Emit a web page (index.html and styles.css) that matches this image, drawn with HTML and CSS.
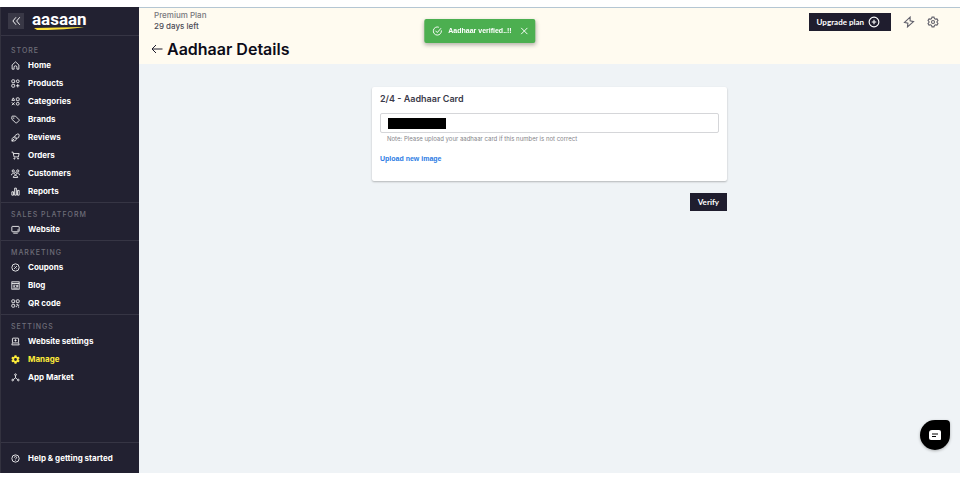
FILE: index.html
```html
<!DOCTYPE html>
<html lang="en">
<head>
    <meta charset="UTF-8">
    <meta name="viewport" content="width=device-width, initial-scale=1.0">
    <title>Aadhaar Details - aasaan</title>
    <link rel="stylesheet" href="styles.css">
</head>
<body>
    <div class="app">
        <aside class="sidebar">
            <div class="brand">
                <button class="collapse" type="button" aria-label="Collapse menu">
                    <svg viewBox="0 0 16 16"><path d="M8 2 3 8 8 14M14 2 9 8 14 14"/></svg>
                </button>
                <a href="#" class="logo">
                    <span>aasaan</span>
                    <svg class="swoosh" viewBox="0 0 52 4"><path d="M2 1 52 0C40 2 18 3.500 5 3Z"/></svg>
                </a>
            </div>
            <nav class="menu">
                <section class="group">
                    <h2>STORE</h2>
                    <ul>
                        <li><a href="#"><svg viewBox="0 0 16 16"><path d="M2 7 8 1.500 14 7V14.500H10.500V11A2.500 2.500 0 0 0 5.500 11V14.500H2Z"/></svg>Home</a></li>
                        <li><a href="#"><svg viewBox="0 0 16 16"><rect x="1.500" y="1.500" width="5" height="5" rx="1"/><rect x="9.500" y="1.500" width="5" height="5" rx="2.500"/><rect x="1.500" y="9.500" width="5" height="5" rx="1"/><path d="M12 9V15M9 12H15"/></svg>Products</a></li>
                        <li><a href="#"><svg viewBox="0 0 16 16"><path d="M4 1.500 6.500 6H1.500Z"/><rect x="9.500" y="1.500" width="5" height="5" rx="1"/><circle cx="12" cy="12" r="2.500"/><path d="M1.500 9.500 6.500 14.500M6.500 9.500 1.500 14.500"/></svg>Categories</a></li>
                        <li><a href="#"><svg viewBox="0 0 16 16"><path d="M1.500 3Q1.500 2 2.500 2H8L14.500 8.500Q15 9 14.500 9.700L10 14.200Q9.300 14.700 8.500 14L1.500 7.500Z"/><circle cx="5" cy="5.500" r=".5"/></svg>Brands</a></li>
                        <li><a href="#"><svg viewBox="0 0 16 16"><path d="M7 5.500Q7 4.500 8 4L11.500 1.800Q14.500 1 14.500 4L13.500 8Q13 9 12 9H8.500Q7 9 7 7.500ZM7 6.500 3.500 8Q2 9 2 11L1.500 14.500 6 14Q8.500 13.500 9 12L9.500 9M2 14 6 10"/></svg>Reviews</a></li>
                        <li><a href="#"><svg viewBox="0 0 16 16"><path d="M1 2H3.500L5.500 10.500H13L14.500 4.500H4"/><circle cx="6" cy="13.500" r="1"/><circle cx="12.500" cy="13.500" r="1"/></svg>Orders</a></li>
                        <li><a href="#"><svg viewBox="0 0 16 16"><circle cx="4" cy="3.500" r="2"/><circle cx="12" cy="3.500" r="2"/><circle cx="8" cy="8" r="2"/><path d="M1 11C1 7 4 7 5 8M15 11C15 7 12 7 11 8M4 15C4 10.500 12 10.500 12 15Z"/></svg>Customers</a></li>
                        <li><a href="#"><svg viewBox="0 0 16 16"><path d="M1.500 8.500H4.500V14.500H1.500ZM6.500 2H9.500V14.500H6.500ZM11.500 6H14.500V14.500H11.500Z"/></svg>Reports</a></li>
                    </ul>
                </section>
                <section class="group">
                    <h2>SALES PLATFORM</h2>
                    <ul>
                        <li><a href="#"><svg viewBox="0 0 16 16"><rect x="1.500" y="2.500" width="13" height="9.500" rx="1"/><path d="M4 14.500H12M11 9H14"/></svg>Website</a></li>
                    </ul>
                </section>
                <section class="group">
                    <h2>MARKETING</h2>
                    <ul>
                        <li><a href="#"><svg viewBox="0 0 16 16"><circle cx="8" cy="8" r="6.500"/><path d="M5.500 10.500 10.500 5.500M5.500 6H6.500M9.500 10H10.500"/></svg>Coupons</a></li>
                        <li><a href="#"><svg viewBox="0 0 16 16"><rect x="1.500" y="1.500" width="13" height="13"/><path d="M1.500 4.500H14.500M4 7.500H8M4 10H7M4 12.500H12M10 7.500H12V10H10Z"/></svg>Blog</a></li>
                        <li><a href="#"><svg viewBox="0 0 16 16"><rect x="1.500" y="1.500" width="5" height="5" rx="1"/><rect x="9.500" y="1.500" width="5" height="5" rx="1"/><rect x="1.500" y="9.500" width="5" height="5" rx="1"/><path d="M9.500 9.500H12V12H14.500M9.500 14.500V12M12.500 14.500H14.500M14.500 9.500V10"/></svg>QR code</a></li>
                    </ul>
                </section>
                <section class="group">
                    <h2>SETTINGS</h2>
                    <ul>
                        <li><a href="#"><svg viewBox="0 0 16 16"><rect x="2.500" y="2" width="11" height="8.500" rx="1"/><path d="M2.500 10.500 1.500 14H14.500L13.500 10.500M8 4V8M6 6H10"/></svg>Website settings</a></li>
                        <li><a href="#" class="active"><svg viewBox="0 0 16 16"><path class="solid" fill-rule="evenodd" d="M6.300 .5H9.700L10.200 2.800 11.500 3.600 13.800 2.900 15.500 5.800 13.700 7.300V8.700L15.500 10.200 13.800 13.100 11.500 12.400 10.200 13.200 9.700 15.500H6.300L5.800 13.200 4.500 12.400 2.200 13.100 .5 10.200 2.300 8.700V7.300L.5 5.800 2.200 2.900 4.500 3.600 5.800 2.800ZM8 5.500A2.500 2.500 0 1 0 8 10.500 2.500 2.500 0 1 0 8 5.500Z"/></svg>Manage</a></li>
                        <li><a href="#"><svg viewBox="0 0 16 16"><circle cx="8" cy="3" r="1.500"/><circle cx="3" cy="12.500" r="1.500"/><circle cx="13" cy="12.500" r="1.500"/><path d="M8 4.500V8.500L4.300 11.500M8 8.500 11.700 11.500"/></svg>App Market</a></li>
                    </ul>
                </section>
            </nav>
            <a href="#" class="help"><svg viewBox="0 0 16 16"><circle cx="8" cy="8" r="6.500"/><path d="M6 6.500C6 3.500 10 3.700 10 6.300 10 7.800 8 7.800 8 9.500M8 11V12"/></svg>Help &amp; getting started</a>
        </aside>

        <main class="main">
            <header class="topbar">
                <div>
                    <p class="plan">Premium Plan</p>
                    <p class="days">29 days left</p>
                    <div class="title">
                        <a href="#" aria-label="Back"><svg viewBox="0 0 12 10"><path d="M11.500 5H1M5 1 1 5 5 9"/></svg></a>
                        <h1>Aadhaar Details</h1>
                    </div>
                </div>
                <div class="actions">
                    <button class="upgrade" type="button">Upgrade plan
                        <svg viewBox="0 0 16 16"><circle cx="8" cy="8" r="6.500"/><path d="M8 5V11M5 8H11"/></svg>
                    </button>
                    <button class="icon-btn" type="button" aria-label="Quick actions">
                        <svg viewBox="0 0 16 16"><path d="M9.500 1.500 2 8.500 6.500 9.500 6 14.500 14 7.500 9.500 6.500Z"/></svg>
                    </button>
                    <button class="icon-btn" type="button" aria-label="Settings">
                        <svg viewBox="0 0 16 16"><path d="M6.700 1.500H9.300L10 3.500 11.300 4.200 13.300 3.800 14.600 6 13.300 7.500V8.500L14.600 10 13.300 12.200 11.300 11.800 10 12.500 9.300 14.500H6.700L6 12.500 4.700 11.800 2.700 12.200 1.400 10 2.700 8.500V7.500L1.400 6 2.700 3.800 4.700 4.200 6 3.500Z"/><circle cx="8" cy="8" r="2"/></svg>
                    </button>
                </div>
            </header>

            <form class="verify-form">
                <div class="card">
                    <label for="aadhaar">2/4 - Aadhaar Card</label>
                    <div class="field">
                        <input type="text" id="aadhaar">
                        <span class="mask"></span>
                    </div>
                    <p class="note">Note: Please upload your aadhaar card if this number is not correct</p>
                    <a href="#" class="upload">Upload new image</a>
                </div>
                <button class="verify" type="button">Verify</button>
            </form>
        </main>
    </div>

    <div class="toast" role="status">
        <svg viewBox="0 0 16 16"><path d="M14.500 7A6.500 6.500 0 1 1 10.500 2M5 7.500 8 10.500 14 3.500"/></svg>
        <span>Aadhaar verified..!!</span>
        <button type="button" aria-label="Close"><svg viewBox="0 0 16 16"><path d="M3 3 13 13M13 3 3 13"/></svg></button>
    </div>

    <button class="chat" type="button" aria-label="Open chat">
        <svg viewBox="0 0 12 10"><path class="bubble" d="M3 0H10Q12 0 12 2V9Q12 10 11 10H2Q0 10 0 8V3Q0 0 3 0Z"/><path class="lines" d="M3 4H9M3 6.500H7"/></svg>
    </button>
</body>
</html>
```
FILE: styles.css
```css
* {
    margin: 0;
    padding: 0;
    box-sizing: border-box;
}

body {
    background: #fff;
    color: #1f1d2e;
    font-family: Inter, sans-serif;
    font-size: 8px;
    line-height: 12px;
}

a {
    color: inherit;
    text-decoration: none;
}

button {
    border: 0;
    background: none;
    color: inherit;
    font: inherit;
    cursor: pointer;
}

svg {
    display: block;
    flex: none;
    fill: none;
    stroke: currentColor;
    stroke-width: 1.5;
}

.app {
    display: flex;
    min-height: 100vh;
    padding: 7px 0;
}

/* Sidebar */
.sidebar {
    display: flex;
    flex-direction: column;
    flex: none;
    width: 139px;
    background: #222131;
    border-left: 1px solid #33323f;
    color: #fff;
    font-weight: 700;
}

.brand {
    display: flex;
    align-items: center;
    gap: 8px;
    height: 28px;
    padding-left: 7px;
}

.collapse {
    display: grid;
    place-items: center;
    width: 16px;
    height: 16px;
    background: #393846;
}

.collapse svg {
    width: 10px;
    height: 10px;
}

.logo {
    font-family: Roboto, sans-serif;
    font-size: 17px;
    line-height: 17px;
}

.logo span {
    display: block;
}

.swoosh {
    width: 52px;
    height: 4px;
    margin-top: -1px;
    fill: #fde23a;
    stroke: none;
}

.menu {
    flex: 1;
}

.group {
    padding: 5px 0 2px;
    border-top: 1px solid #363544;
}

.group:first-child {
    padding-top: 8px;
}

.group h2 {
    height: 12px;
    padding-left: 10px;
    color: #6f6e79;
    font-size: 7px;
    font-weight: 500;
    line-height: 14px;
    letter-spacing: 1px;
}

.group ul {
    list-style: none;
}

.group a,
.help {
    display: flex;
    align-items: center;
    gap: 8px;
    height: 18px;
    padding-left: 10px;
}

.group svg,
.help svg {
    width: 9px;
    height: 9px;
}

.group .active {
    color: #fdec3a;
}

.solid {
    fill: currentColor;
    stroke: none;
}

.help {
    height: 31px;
    border-top: 1px solid #363544;
}

/* Main area */
.main {
    flex: 1;
    background: #eff3f6;
    border-top: 1px solid #b4c6d3;
}

.topbar {
    display: flex;
    justify-content: space-between;
    height: 56px;
    padding: 2px 21px 0 15px;
    background: #fffbf0;
}

.plan {
    color: #77777c;
    font-weight: 500;
    line-height: 11px;
}

.days {
    color: #4c4b56;
    font-weight: 500;
    line-height: 11px;
}

.title {
    display: flex;
    align-items: center;
    gap: 4px;
    margin: 7px 0 0 -3px;
}

.title svg {
    width: 12px;
    height: 10px;
    stroke-width: 1;
}

.title h1 {
    color: #0c0b18;
    font-size: 16px;
    font-weight: 600;
    line-height: 20px;
}

.actions {
    display: flex;
    align-items: center;
    gap: 12px;
    height: 24px;
}

.upgrade {
    display: flex;
    align-items: center;
    gap: 4px;
    height: 18px;
    padding: 0 11px 0 8px;
    background: #1f1d2e;
    color: #fff;
    font-family: Lato, sans-serif;
    font-weight: 700;
}

.upgrade svg {
    width: 12px;
    height: 12px;
}

.icon-btn {
    color: #62616c;
}

.icon-btn svg {
    width: 12px;
    height: 12px;
}

/* Aadhaar form */
.verify-form {
    display: flex;
    flex-direction: column;
    align-items: flex-end;
    gap: 12px;
    max-width: 355px;
    margin: 23px auto 0;
}

.card {
    width: 100%;
    padding: 6px 8px 16px;
    background: #fff;
    border-radius: 2px;
    box-shadow: 0 1px 2px rgba(0, 0, 0, 0.25);
}

.card label {
    display: block;
    color: #3b3a4a;
    font-size: 9px;
    font-weight: 600;
}

.field {
    position: relative;
    margin-top: 8px;
}

.field input {
    display: block;
    width: 100%;
    height: 20px;
    padding: 0 8px;
    border: 1px solid #d5d6d9;
    border-radius: 2px;
    font: inherit;
}

.mask {
    position: absolute;
    top: 5px;
    left: 8px;
    width: 58px;
    height: 11px;
    background: #000;
}

.note {
    padding-left: 7px;
    color: #85858a;
    font-size: 6px;
}

.upload {
    display: inline-block;
    margin-top: 8px;
    color: #2b7be4;
    font-family: "Liberation Sans", sans-serif;
    font-size: 7px;
    font-weight: 700;
}

.verify {
    height: 18px;
    padding: 0 8px;
    background: #1f1d2e;
    color: #fff;
    font-family: Lato, sans-serif;
    font-weight: 700;
}

/* Floating elements */
.toast {
    position: fixed;
    top: 19px;
    left: 50%;
    display: flex;
    align-items: center;
    height: 24px;
    padding: 0 6px 0 8px;
    transform: translateX(-50%);
    background: #4caf50;
    border-radius: 2px;
    box-shadow: 0 2px 4px rgba(0, 0, 0, 0.3);
    color: #fff;
    font-family: "Liberation Sans", sans-serif;
    font-size: 7px;
    font-weight: 700;
}

.toast svg {
    width: 10px;
    height: 10px;
}

.toast span {
    margin: 0 8px 0 6px;
}

.chat {
    position: fixed;
    right: 10px;
    bottom: 30px;
    display: grid;
    place-items: center;
    width: 30px;
    height: 30px;
    background: #000;
    border-radius: 50% 4px 50% 50%;
    box-shadow: 0 1px 3px rgba(0, 0, 0, 0.3);
}

.chat svg {
    width: 12px;
    height: 10px;
}

.bubble {
    fill: #fff;
    stroke: none;
}

.lines {
    stroke: #000;
    stroke-width: 1;
}
```
